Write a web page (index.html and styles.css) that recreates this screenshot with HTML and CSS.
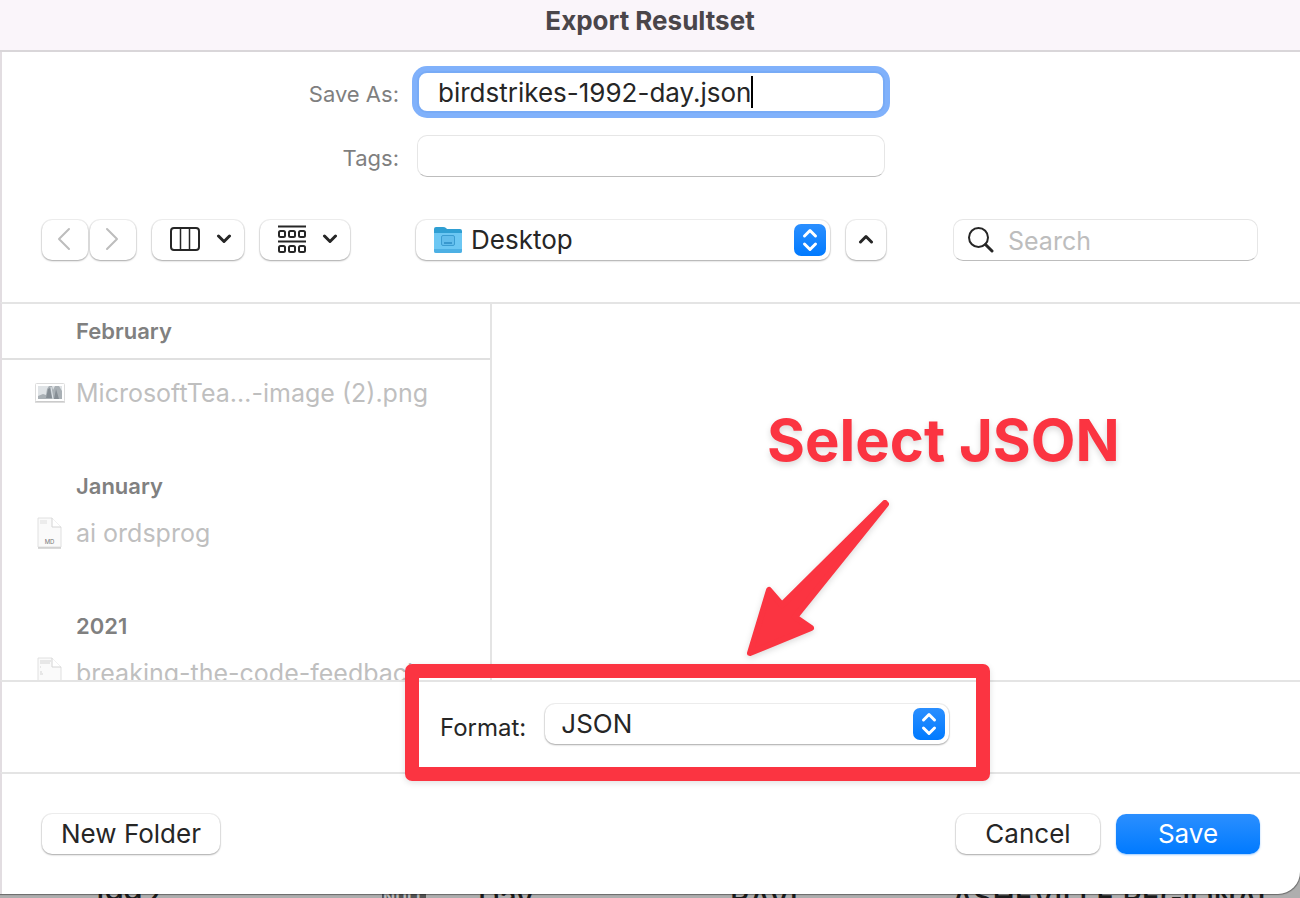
FILE: index.html
```html
<!DOCTYPE html>
<html lang="en">
<head>
<meta charset="utf-8">
<title>Export Resultset</title>
<link rel="stylesheet" href="styles.css">
</head>
<body>
<form class="dialog">
  <header class="titlebar"><h1>Export Resultset</h1></header>

  <section class="fields">
    <label for="name">Save As:</label>
    <div class="field field-focus">
      <input id="name" class="name-input" type="text" value="birdstrikes-1992-day.json">
      <span class="caret"></span>
    </div>
    <label for="tags">Tags:</label>
    <input id="tags" class="field" type="text">
  </section>

  <nav class="toolbar">
    <div class="nav-pair">
      <button type="button" class="btn arrow-btn" aria-label="Back">
        <svg width="14" height="24" viewBox="0 0 14 24"><path d="M12 2 L2 12 L12 22" fill="none" stroke="#bdbdbd" stroke-width="2" stroke-linecap="round" stroke-linejoin="round"/></svg>
      </button>
      <button type="button" class="btn arrow-btn" aria-label="Forward">
        <svg width="14" height="24" viewBox="0 0 14 24"><path d="M2 2 L12 12 L2 22" fill="none" stroke="#bdbdbd" stroke-width="2" stroke-linecap="round" stroke-linejoin="round"/></svg>
      </button>
    </div>
    <button type="button" class="btn view-btn" aria-label="Column view">
      <svg width="30" height="24" viewBox="0 0 30 24" fill="none" stroke="#262626"><rect x="1" y="1" width="28" height="22" rx="3" stroke-width="2"/><path d="M10.500 1V23M19.500 1V23" stroke-width="1.500"/></svg>
      <svg width="16" height="10" viewBox="0 0 16 10"><path d="M2.500 2 L8 7.500 L13.500 2" fill="none" stroke="#262626" stroke-width="3" stroke-linecap="round" stroke-linejoin="round"/></svg>
    </button>
    <button type="button" class="btn view-btn group-btn" aria-label="Group items">
      <svg width="28" height="28" viewBox="0 0 28 28" fill="none" stroke="#262626"><path d="M0 1.500H28M0 16.500H28" stroke-width="2"/><g stroke-width="2"><rect x="1" y="6" width="6" height="6" rx="1.500"/><rect x="11" y="6" width="6" height="6" rx="1.500"/><rect x="21" y="6" width="6" height="6" rx="1.500"/><rect x="1" y="21" width="6" height="6" rx="1.500"/><rect x="11" y="21" width="6" height="6" rx="1.500"/><rect x="21" y="21" width="6" height="6" rx="1.500"/></g></svg>
      <svg width="16" height="10" viewBox="0 0 16 10"><path d="M2.500 2 L8 7.500 L13.500 2" fill="none" stroke="#262626" stroke-width="3" stroke-linecap="round" stroke-linejoin="round"/></svg>
    </button>
    <div class="popup location">
      <svg class="folder" width="30" height="28" viewBox="0 0 30 28"><path d="M1 3Q1 1 3 1H10Q12 1 13 2L14 3H27Q29 3 29 5V12H1Z" fill="#2f9fd3"/><path d="M1 7H29V25Q29 27 27 27H3Q1 27 1 25Z" fill="#6cc7f3"/><path d="M1 23H29V25Q29 27 27 27H3Q1 27 1 25Z" fill="#4db0e4"/><rect x="8.500" y="9.500" width="13" height="10" rx="1.500" fill="#62bdec" stroke="#3b9dd2"/><path d="M11 17H19" stroke="#2c8dc4" stroke-width="1.500"/></svg>
      <select aria-label="Location"><option>Desktop</option></select>
      <svg class="stepper" width="32" height="32" viewBox="0 0 32 32"><defs><linearGradient id="blue" x1="0" y1="0" x2="0" y2="1"><stop offset="0" stop-color="#2b8fff"/><stop offset="1" stop-color="#007aff"/></linearGradient></defs><rect width="32" height="32" rx="7" fill="url(#blue)"/><path d="M10.500 12 L16 6.500 L21.500 12M10.500 20 L16 25.500 L21.500 20" fill="none" stroke="#fff" stroke-width="3" stroke-linecap="round" stroke-linejoin="round"/></svg>
    </div>
    <button type="button" class="btn collapse-btn" aria-label="Collapse">
      <svg width="16" height="10" viewBox="0 0 16 10"><path d="M2.500 8 L8 2.500 L13.500 8" fill="none" stroke="#262626" stroke-width="3" stroke-linecap="round" stroke-linejoin="round"/></svg>
    </button>
    <div class="field search">
      <svg width="26" height="26" viewBox="0 0 26 26" fill="none" stroke="#262626"><circle cx="10.500" cy="10.500" r="9.500" stroke-width="2"/><path d="M17.500 17.500 L24 24" stroke-width="3" stroke-linecap="round"/></svg>
      <input type="search" placeholder="Search" aria-label="Search">
    </div>
  </nav>

  <main class="browser">
    <div class="files">
      <section class="group">
        <h2 class="ruled">February</h2>
        <div class="file">
          <svg width="30" height="20" viewBox="0 0 30 20"><rect x="0.500" y="0.500" width="29" height="18" rx="1" fill="#fff" stroke="#dcdcdc"/><path d="M0 19H30" stroke="#bbb"/><rect x="3" y="3" width="24" height="13" fill="#dfe3e6"/><path d="M3 13L8 11L11 12L12 6L14 3H17L18 7L20 3H24L27 8V16H3Z" fill="#a9b0b5"/><path d="M13 6L15 5L17 15H11ZM21 6L24 16H19Z" fill="#858d94"/><path d="M16 4L18 16" stroke="#dfe5ea"/></svg>
          <span>MicrosoftTea…-image (2).png</span>
        </div>
      </section>
      <section class="group">
        <h2>January</h2>
        <div class="file">
          <svg width="30" height="32" viewBox="0 0 30 32"><path d="M3 1H17L26 10V30H3Z" fill="#fafafa" stroke="#e0e0e0"/><path d="M17 1V10H26" fill="#fff" stroke="#d4d4d4"/><path d="M3 31H26" stroke="#b5b5b5"/><path d="M5 4H12M5 6H12" stroke="#dedede"/><text x="14.500" y="27" class="file-kind">MD</text></svg>
          <span>ai ordsprog</span>
        </div>
      </section>
      <section class="group">
        <h2>2021</h2>
        <div class="file">
          <svg width="30" height="32" viewBox="0 0 30 32"><path d="M3 1H17L26 10V30H3Z" fill="#fafafa" stroke="#e0e0e0"/><path d="M17 1V10H26" fill="#fff" stroke="#d4d4d4"/><path d="M5 4H16M5 6H15M5 10H6M5 15H7M5 17H8" stroke="#d4d4d4"/></svg>
          <span>breaking-the-code-feedback</span>
        </div>
      </section>
    </div>
    <div class="preview">
      <p class="note">Select JSON</p>
      <svg class="note-arrow" width="160" height="176" viewBox="740 490 160 176"><path d="M885 503L782 605L769 590L750 653L811 628L795 617L886 504Z" fill="#fb3441" stroke="#fb3441" stroke-width="6" stroke-linejoin="round"/></svg>
    </div>
  </main>

  <section class="format">
    <label for="format">Format:</label>
    <div class="popup format-popup">
      <select id="format"><option>JSON</option></select>
      <svg class="stepper" width="32" height="32" viewBox="0 0 32 32"><rect width="32" height="32" rx="7" fill="url(#blue)"/><path d="M10.500 12 L16 6.500 L21.500 12M10.500 20 L16 25.500 L21.500 20" fill="none" stroke="#fff" stroke-width="3" stroke-linecap="round" stroke-linejoin="round"/></svg>
    </div>
    <div class="highlight"></div>
  </section>

  <footer class="actions">
    <button type="button" class="btn new-folder">New Folder</button>
    <button type="button" class="btn cancel">Cancel</button>
    <button type="submit" class="btn save">Save</button>
  </footer>
</form>

<div class="backdrop">
  <span>1992</span><span><b class="null">NULL</b></span><span>Day</span><span>RAVI</span><span>ASHEVILLE REGIONAL</span>
</div>
</body>
</html>
```
FILE: styles.css
```css
* { box-sizing: border-box; }

body {
  margin: 0;
  height: 100vh;
  padding-bottom: 4px;
  background: #aeaeae;
  color: #262626;
  font-family: Inter, "Liberation Sans", sans-serif;
  font-size: 26px;
  overflow: hidden;
}

input, select, button { font: inherit; color: inherit; }

.dialog {
  position: relative;
  z-index: 1;
  display: flex;
  flex-direction: column;
  height: 100%;
  background: #fff;
  border-bottom-right-radius: 22px;
  box-shadow: 0 0 1px 1px rgba(0, 0, 0, 0.4);
}

.dialog > :not(.titlebar) { border-left: 2px solid #e2dde1; }

.titlebar {
  flex: none;
  height: 52px;
  padding-top: 4px;
  background: #faf5fa;
  border-bottom: 2px solid #d9d6d9;
  text-align: center;
}

h1 {
  margin: 0;
  font-size: 26px;
  line-height: 34px;
  font-weight: 700;
  color: #4a464a;
}

.fields {
  display: grid;
  grid-template-columns: 397px 468px;
  column-gap: 18px;
  row-gap: 22px;
  align-items: center;
  padding-top: 19px;
}

.fields label {
  padding-top: 4px;
  text-align: right;
  font-size: 22px;
  color: #7f7f7f;
}

.field {
  height: 42px;
  border: 1px solid #e6e6e6;
  border-bottom-color: #bdbdbd;
  border-radius: 10px;
  background: #fff;
  outline: 0;
}

.field-focus {
  display: flex;
  align-items: center;
  padding-left: 19px;
  border: 2px solid #78abf6;
  box-shadow: 0 0 0 5px #80b1fb;
}

.field input, .popup select {
  min-width: 0;
  padding: 0;
  border: 0;
  outline: 0;
  background: none;
  appearance: none;
}

.field .name-input { field-sizing: content; }

.caret {
  width: 2px;
  height: 32px;
  background: #000;
}

.toolbar {
  display: flex;
  align-items: center;
  gap: 16px;
  padding: 42px 42px 41px 40px;
}

.nav-pair { display: flex; gap: 2px; }

.btn {
  display: flex;
  align-items: center;
  justify-content: center;
  height: 40px;
  padding: 0 0 2px;
  border: 0;
  border-radius: 10px;
  background: #fff;
  box-shadow: 0 0 0 1px rgba(0, 0, 0, 0.06), 0 1px 2px rgba(0, 0, 0, 0.3);
}

.arrow-btn { width: 46px; padding-right: 2px; }
.view-btn { width: 92px; gap: 16px; padding-left: 6px; }
.group-btn { width: 90px; }
.collapse-btn { width: 40px; }

.popup {
  display: flex;
  align-items: center;
  height: 40px;
  padding-right: 4px;
  border-radius: 10px;
  background: #fff;
  box-shadow: 0 0 0 1px rgba(0, 0, 0, 0.06), 0 1px 2px rgba(0, 0, 0, 0.3);
}

.popup select { flex: 1; padding-bottom: 2px; }
.popup svg { flex: none; }

.location {
  width: 414px;
  margin-left: 50px;
  padding-left: 17px;
}

.location select { padding-left: 8px; }

.search {
  display: flex;
  align-items: center;
  gap: 14px;
  width: 305px;
  margin-left: auto;
  padding-left: 14px;
}

.search svg { flex: none; }
.search input { flex: 1; padding-top: 2px; font-size: 25px; }
.search input::placeholder { color: #bdbdbd; opacity: 1; }

.browser {
  flex: 1;
  display: flex;
  min-height: 0;
  border-top: 2px solid #e4e4e4;
}

.files {
  width: 490px;
  flex: none;
  overflow: hidden;
  border-right: 2px solid #e4e4e4;
}

.group { margin-bottom: 46px; }

h2 {
  margin: 0;
  padding-left: 74px;
  font-size: 22px;
  line-height: 46px;
  font-weight: 600;
  color: #808080;
}

h2.ruled {
  margin-bottom: 9px;
  line-height: 54px;
  border-bottom: 2px solid #e0e0e0;
}

.file {
  display: flex;
  align-items: center;
  gap: 11px;
  height: 48px;
  padding-left: 33px;
  font-size: 25px;
  color: #bfbfbf;
  white-space: nowrap;
}

.file svg { flex: none; }

.file-kind {
  font-size: 6px;
  text-anchor: middle;
  fill: #777;
}

.preview { position: relative; flex: 1; }

.note {
  position: absolute;
  left: 275px;
  top: 101px;
  margin: 0;
  font-size: 58px;
  line-height: 70px;
  font-weight: 700;
  color: #fb3441;
  white-space: nowrap;
  text-shadow: 0 3px 6px rgba(0, 0, 0, 0.15);
}

.note-arrow {
  position: absolute;
  left: 248px;
  top: 186px;
  filter: drop-shadow(0 2px 3px rgba(0, 0, 0, 0.15));
}

.format {
  position: relative;
  display: flex;
  align-items: center;
  gap: 19px;
  height: 92px;
  padding-left: 438px;
  padding-bottom: 6px;
  border-top: 2px solid #e4e4e4;
}

.format label { padding-top: 6px; font-size: 24px; }
.format-popup { width: 404px; padding-left: 16px; }

.highlight {
  position: absolute;
  left: 403px;
  top: -18px;
  width: 585px;
  height: 117px;
  border: 14px solid #fb3441;
  border-radius: 7px;
  box-shadow: 0 2px 6px rgba(0, 0, 0, 0.12);
  pointer-events: none;
}

.actions {
  display: flex;
  gap: 16px;
  padding: 40px;
  border-top: 2px solid #e4e4e4;
}

.new-folder { width: 178px; margin-right: auto; }
.cancel { width: 144px; }

.save {
  width: 144px;
  color: #fff;
  background: linear-gradient(#2b8fff, #007aff);
  box-shadow: 0 1px 2px rgba(0, 122, 255, 0.4);
}

.backdrop {
  position: absolute;
  left: 0;
  right: 0;
  bottom: -14px;
  display: grid;
  grid-template-columns: 290px 96px 252px 222px 1fr;
  padding-left: 92px;
  font-size: 30px;
  line-height: 30px;
  font-weight: 500;
  white-space: nowrap;
  color: #1c1c1c;
}

.null {
  display: block;
  width: 44px;
  margin-top: 6px;
  font-size: 16px;
  line-height: 18px;
  text-align: center;
  color: #bbb;
  background: #555;
}
```
